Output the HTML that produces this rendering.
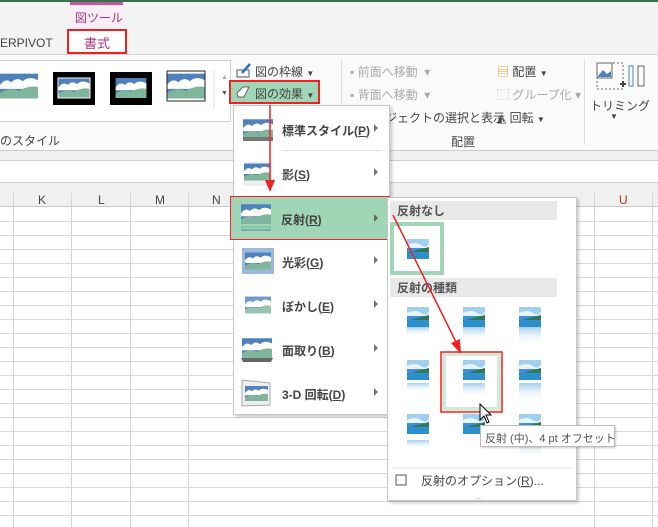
<!DOCTYPE html>
<html><head><meta charset="utf-8"><style>
*{margin:0;padding:0;box-sizing:border-box}
body{width:658px;height:527px;overflow:hidden;position:relative;background:#fff;font-family:"Liberation Sans","Noto Sans CJK JP",sans-serif;font-size:12px;color:#444}
.a{position:absolute}
.t{white-space:nowrap}
.g{color:#aaa}
.mi{position:absolute;left:0;width:157px;height:44px}
.mi .lbl{position:absolute;left:48px;top:14px;font-size:12px;font-weight:bold;color:#444}
.mi .ar{position:absolute;left:140px;top:16px;width:0;height:0;border-left:4px solid #777;border-top:4px solid transparent;border-bottom:4px solid transparent}
.vl{position:absolute;top:193px;width:1px;height:334px;background:#d4d4d4}
.hl{position:absolute;left:0;width:658px;height:1px;background:#d8d8d8}
</style></head><body>
<div class="a" style="left:0;top:0;width:658px;height:2px;background:#3a6e4c"></div>
<div class="a" style="left:0;top:2px;width:658px;height:53px;background:#f3f3f3"></div>
<div class="a" style="left:70px;top:2px;width:53px;height:52px;background:#fbeef6"></div>
<div class="a" style="left:70px;top:2px;width:53px;height:3px;background:#c0589a"></div>
<div class="a t" style="left:75px;top:9px;color:#a6357e;font-size:12px">図ツール</div>
<div class="a" style="left:67px;top:29px;width:60px;height:25px;border:2px solid #e22;background:#fff"></div>
<div class="a t" style="left:84px;top:33px;color:#a6357e;font-size:13px">書式</div>
<div class="a t" style="left:0;top:36px;font-size:12px;color:#444">ERPIVOT</div>
<div class="a" style="left:0;top:54px;width:658px;height:1px;background:#d5d5d5"></div>
<div class="a" style="left:0;top:55px;width:658px;height:95px;background:#fafafa"></div>
<div class="a" style="left:0;top:60px;width:231px;height:62px;border:1px solid #d0d0d0;border-left:none;background:#fff"></div>
<svg class="a" style="left:0;top:70px" width="230" height="38">
<defs><symbol id="pic" viewBox="0 0 40 26"><rect width="40" height="26" fill="#4f81bd"/><path d="M0 12 Q6 4 12 9 Q18 3 24 8 Q30 2 40 7 V16 H0Z" fill="#fff"/><path d="M0 26 V20 Q10 14 20 18 Q30 12 40 14 V26Z" fill="#7fb59a"/></symbol></defs>
<use href="#pic" x="0" y="2" width="38" height="28"/>
<rect x="53" y="2" width="42" height="33" fill="#000"/><use href="#pic" x="58" y="8" width="32" height="20"/><rect x="58" y="8" width="32" height="20" fill="none" stroke="#fff"/>
<rect x="110" y="2" width="42" height="33" fill="#000"/><use href="#pic" x="115" y="8" width="32" height="20"/>
<use href="#pic" x="167" y="1" width="38" height="30"/><rect x="167" y="1" width="38" height="30" fill="none" stroke="#222"/>
<text x="221" y="9" font-size="7" fill="#aaa">▲</text><text x="221" y="25" font-size="7" fill="#555">▼</text>
<line x1="214" y1="0" x2="214" y2="38" stroke="#ddd"/>
</svg>
<div class="a t" style="left:0;top:132px">のスタイル</div>
<svg class="a" style="left:236px;top:62px" width="16" height="16"><rect x="1" y="8" width="12" height="7" fill="none" stroke="#555"/><path d="M6 11 L14 2" stroke="#2b72c6" stroke-width="2.5"/></svg>
<div class="a t" style="left:255px;top:63px">図の枠線 <span style="font-size:8px">▼</span></div>
<div class="a" style="left:229px;top:80px;width:91px;height:24px;background:#a0d5b5;border:2px solid #e22"></div>
<svg class="a" style="left:235px;top:85px" width="16" height="14"><path d="M2 8 L8 2 H14 L9 12 H3Z" fill="#fff" stroke="#666"/></svg>
<div class="a t" style="left:255px;top:85px">図の効果 <span style="font-size:8px">▼</span></div>
<div class="a" style="left:341px;top:60px;width:1px;height:85px;background:#ddd"></div>
<div class="a t g" style="left:350px;top:63px">▪ 前面へ移動 &nbsp;▾</div>
<div class="a t g" style="left:350px;top:86px">▪ 背面へ移動 &nbsp;▾</div>
<div class="a t" style="left:385px;top:109px">ジェクトの選択と表示</div>
<div class="a t" style="left:497px;top:63px"><span style="color:#e0a030">▤</span> 配置 <span style="font-size:8px">▼</span></div>
<div class="a t g" style="left:497px;top:86px">⬚ グループ化 ▾</div>
<div class="a t" style="left:497px;top:109px">◭ 回転 <span style="font-size:8px">▼</span></div>
<div class="a t" style="left:451px;top:133px">配置</div>
<div class="a" style="left:584px;top:60px;width:1px;height:85px;background:#ddd"></div>
<svg class="a" style="left:596px;top:62px" width="60" height="32"><rect x="1" y="1" width="15" height="15" fill="#fff" stroke="#666"/><path d="M2 14 L7 8 L11 12 L15 9 V15 H2Z" fill="#4f81bd"/><rect x="1" y="1" width="26" height="26" fill="none" stroke="#666" stroke-dasharray="2 2"/><path d="M24 22 h6 M27 19 v6" stroke="#444" stroke-width="2"/><rect x="33" y="4" width="4" height="20" fill="none" stroke="#4f81bd"/><rect x="42" y="4" width="6" height="20" fill="none" stroke="#666"/></svg>
<div class="a t" style="left:590px;top:97px;font-size:12px">トリミング</div>
<div class="a t" style="left:610px;top:112px;font-size:8px">▼</div>
<div class="a" style="left:0;top:150px;width:658px;height:10px;background:#f0f0f0;border-top:1px solid #ccc"></div>
<div class="a" style="left:0;top:160px;width:658px;height:1px;background:#ccc"></div>
<div class="a" style="left:0;top:182px;width:658px;height:25px;background:#f0f0f0;border-top:1px solid #ccc"></div>
<div class="a" style="left:0;top:206px;width:658px;height:1px;background:#c8c8c8"></div>
<div class="a t" style="left:38px;top:193px">K</div>
<div class="a t" style="left:98px;top:193px">L</div>
<div class="a t" style="left:155px;top:193px">M</div>
<div class="a t" style="left:212px;top:193px">N</div>
<div class="a t" style="left:619px;top:193px;color:#a33">U</div>
<div class="vl" style="left:13px"></div><div class="vl" style="left:71px"></div><div class="vl" style="left:130px"></div><div class="vl" style="left:188px"></div><div class="vl" style="left:594px"></div><div class="vl" style="left:652px"></div>
<div class="hl" style="top:221px"></div><div class="hl" style="top:235px"></div><div class="hl" style="top:249px"></div><div class="hl" style="top:263px"></div><div class="hl" style="top:277px"></div><div class="hl" style="top:291px"></div><div class="hl" style="top:305px"></div><div class="hl" style="top:319px"></div><div class="hl" style="top:333px"></div><div class="hl" style="top:347px"></div><div class="hl" style="top:361px"></div><div class="hl" style="top:375px"></div><div class="hl" style="top:389px"></div><div class="hl" style="top:403px"></div><div class="hl" style="top:417px"></div><div class="hl" style="top:431px"></div><div class="hl" style="top:445px"></div><div class="hl" style="top:459px"></div><div class="hl" style="top:473px"></div><div class="hl" style="top:487px"></div><div class="hl" style="top:501px"></div><div class="hl" style="top:515px"></div>
<div class="a" style="left:233px;top:105px;width:157px;height:310px;background:#fff;border:1px solid #c6c6c6;box-shadow:2px 2px 3px rgba(0,0,0,.2)">
<div class="a" style="left:48px;top:44px;width:100px;height:1px;background:#e0e0e0"></div>
<div class="mi" style="top:2px"><svg class="a" style="left:8px;top:7px" width="32" height="28"><use href="#pic" x="1" y="3" width="30" height="22"/><rect x="1" y="22" width="30" height="4" fill="#777"/></svg><span class="lbl t">標準スタイル(<u>P</u>)</span><span class="ar"></span></div>
<div class="mi" style="top:46px"><svg class="a" style="left:8px;top:8px" width="32" height="28"><rect x="2" y="2" width="28" height="24" fill="#eee"/><use href="#pic" x="2" y="2" width="26" height="20"/></svg><span class="lbl t">影(<u>S</u>)</span><span class="ar"></span></div>
<div class="mi" style="top:134px"><svg class="a" style="left:8px;top:8px" width="32" height="28"><rect x="0" y="0" width="32" height="26" fill="#9cb8dc"/><use href="#pic" x="3" y="3" width="26" height="20"/></svg><span class="lbl t">光彩(<u>G</u>)</span><span class="ar"></span></div>
<div class="mi" style="top:178px"><svg class="a" style="left:8px;top:8px" width="32" height="28"><use href="#pic" x="3" y="3" width="26" height="20" opacity=".8"/></svg><span class="lbl t">ぼかし(<u>E</u>)</span><span class="ar"></span></div>
<div class="mi" style="top:222px"><svg class="a" style="left:6px;top:8px" width="34" height="28"><use href="#pic" x="2" y="2" width="30" height="20"/><path d="M1 22 H33 L31 26 H3Z" fill="#666"/></svg><span class="lbl t">面取り(<u>B</u>)</span><span class="ar"></span></div>
<div class="mi" style="top:266px"><svg class="a" style="left:6px;top:6px" width="34" height="30"><path d="M2 2 L30 5 V27 L2 28Z" fill="#eee" stroke="#aaa"/><use href="#pic" x="5" y="7" width="23" height="17"/></svg><span class="lbl t">3-D 回転(<u>D</u>)</span><span class="ar"></span></div>
</div>
<div class="a" style="left:230px;top:196px;width:160px;height:44px;background:#a0d5b5;border:1px solid #e22">
<svg class="a" style="left:9px;top:6px" width="32" height="32"><use href="#pic" x="1" y="1" width="30" height="20"/><rect x="1" y="23" width="30" height="2" fill="#7fb59a" opacity=".6"/><rect x="1" y="26" width="30" height="2" fill="#4f81bd" opacity=".5"/></svg>
<span class="a t" style="left:50px;top:14px;font-size:12px;font-weight:bold;color:#444">反射(<u>R</u>)</span>
<span class="a" style="left:143px;top:17px;border-left:4px solid #666;border-top:4px solid transparent;border-bottom:4px solid transparent"></span>
</div>
<div class="a" style="left:387px;top:197px;width:190px;height:304px;background:#fff;border:1px solid #c6c6c6;box-shadow:2px 2px 3px rgba(0,0,0,.2)"></div>
<svg class="a" style="left:387px;top:197px" width="190" height="304">
<defs><symbol id="sea" viewBox="0 0 22 20"><rect width="22" height="20" fill="#3a8fd8"/><rect y="0" width="22" height="9" fill="#9fd0f0"/><path d="M0 6 Q8 2 14 6 T22 4 V9 H0Z" fill="#e8f4fb"/><path d="M0 14 L22 8 V13 H0Z" fill="#2e7a4e"/><rect y="14" width="22" height="6" fill="#2b8fd0"/></symbol>
<linearGradient id="fd" x1="0" y1="0" x2="0" y2="1"><stop offset="0" stop-color="#7fb8e0" stop-opacity=".7"/><stop offset="1" stop-color="#fff" stop-opacity="0"/></linearGradient></defs>
<rect x="3" y="4" width="167" height="19" fill="#e8e8e8"/>
<text x="10" y="18" font-size="12" font-weight="bold" fill="#555">反射なし</text>
<rect x="5" y="27" width="50" height="49" fill="none" stroke="#a0d5b5" stroke-width="4"/>
<use href="#sea" x="20" y="42" width="22" height="20"/>
<rect x="3" y="81" width="167" height="19" fill="#e8e8e8"/>
<text x="10" y="95" font-size="12" font-weight="bold" fill="#555">反射の種類</text>
<use href="#sea" x="20" y="110" width="22" height="20"/><rect x="20" y="130" width="22" height="9" fill="url(#fd)"/>
<use href="#sea" x="76" y="110" width="22" height="20"/><rect x="76" y="130" width="22" height="14" fill="url(#fd)"/>
<use href="#sea" x="132" y="110" width="22" height="20"/><rect x="132" y="130" width="22" height="18" fill="url(#fd)"/>
<rect x="57" y="157" width="55" height="55" fill="none" stroke="#d0ebd9" stroke-width="4"/>
<rect x="54" y="155" width="61" height="60" fill="none" stroke="#e22" stroke-width="1.5"/>
<use href="#sea" x="20" y="163" width="22" height="20"/><rect x="20" y="186" width="22" height="9" fill="url(#fd)"/>
<use href="#sea" x="76" y="163" width="22" height="20"/><rect x="76" y="186" width="22" height="14" fill="url(#fd)"/>
<use href="#sea" x="132" y="163" width="22" height="20"/><rect x="132" y="186" width="22" height="18" fill="url(#fd)"/>
<use href="#sea" x="20" y="217" width="22" height="20"/><rect x="20" y="243" width="22" height="9" fill="url(#fd)"/>
<use href="#sea" x="76" y="217" width="22" height="20"/>
<use href="#sea" x="132" y="217" width="22" height="20"/><rect x="132" y="243" width="22" height="18" fill="url(#fd)"/>
<line x1="5" y1="271" x2="185" y2="271" stroke="#ddd"/>
<rect x="9" y="278" width="10" height="10" fill="#fff" stroke="#555"/>
<text x="34" y="288" font-size="12" fill="#444">反射のオプション(<tspan text-decoration="underline">R</tspan>)...</text>
<text x="87" y="302" font-size="8" fill="#aaa">....</text>
</svg>
<div class="a t" style="left:480px;top:425px;width:135px;height:22px;background:#fff;border:1px solid #bbb;box-shadow:1px 1px 2px rgba(0,0,0,.2);padding:4px 4px;font-size:11px;color:#555">反射 (中)、4 pt オフセット</div>
<svg class="a" style="left:479px;top:403px" width="14" height="22"><path d="M1 1 V17 L5 13 L8 20 L10 19 L7 12 H12Z" fill="#fff" stroke="#000"/></svg>
<svg class="a" style="left:0;top:0" width="658" height="527">
<line x1="270" y1="105" x2="270" y2="182" stroke="#e22" stroke-width="1.5"/><path d="M265 180 L270 192 L275 180Z" fill="#e22"/>
<line x1="393" y1="215" x2="457" y2="344" stroke="#e22" stroke-width="1.5"/><path d="M451 343 L461 354 L460 339Z" fill="#e22"/>
</svg>
</body></html>
